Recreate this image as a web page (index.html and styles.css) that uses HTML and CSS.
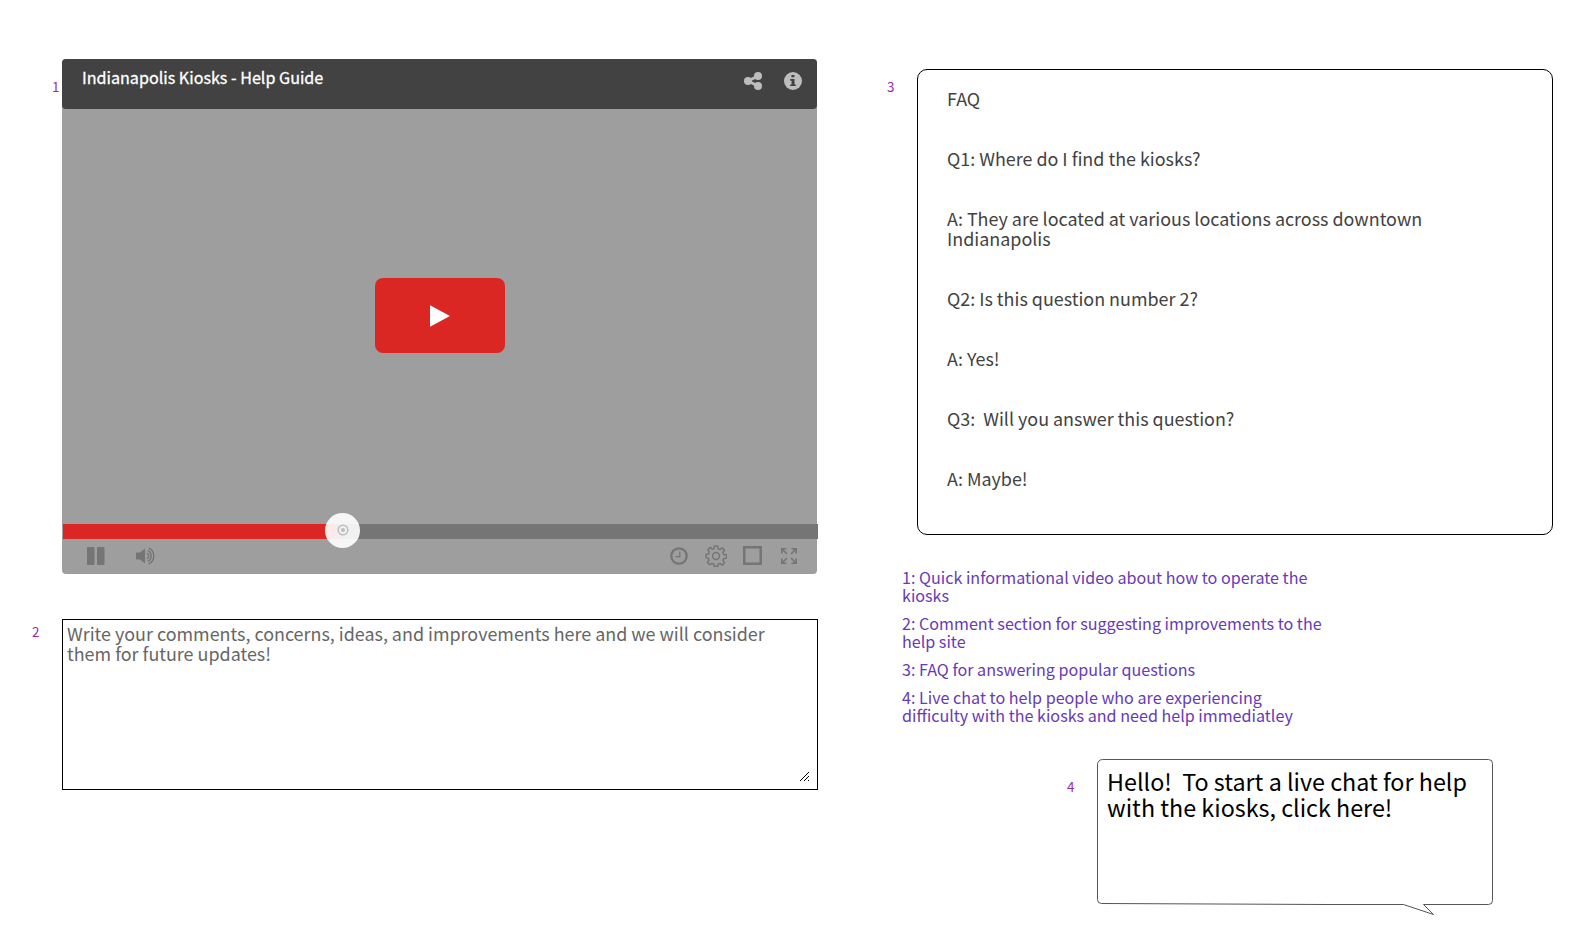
FILE: index.html
```html
<!DOCTYPE html>
<html lang="en">
<head>
<meta charset="utf-8">
<title>Indianapolis Kiosks - Help Guide</title>
<link rel="stylesheet" href="styles.css">
</head>
<body>
<main class="page">
  <div class="col-left">
    <section class="row row-video">
      <span class="marker marker-1">1</span>
      <div class="video">
        <header class="video-head">
          <h1 class="video-title">Indianapolis Kiosks - Help Guide</h1>
          <svg class="icon-share" width="18" height="18" viewBox="0 0 18 18"><path d="M4 9 14 4M4 9l10 5" stroke="currentColor" stroke-width="3"/><g fill="currentColor"><circle cx="4" cy="9" r="4"/><circle cx="14" cy="4" r="4"/><circle cx="14" cy="14" r="4"/></g></svg>
          <svg class="icon-info" width="18" height="18" viewBox="0 0 18 18"><circle cx="9" cy="9" r="9" fill="currentColor"/><path d="M7.400 2.900h3v2.400h-3zM6.200 7h4.300v5.400h1.300v1.700H6.200v-1.700h1.400V8.700H6.200z" fill="#424242"/></svg>
        </header>
        <div class="stage">
          <div class="play"><svg width="20" height="22" viewBox="0 0 20 22"><path d="M0 .3 20 11 0 21.700z" fill="#fff"/></svg></div>
        </div>
        <div class="progress"><div class="progress-fill"></div>
          <div class="knob"><svg width="12" height="12" viewBox="0 0 12 12"><circle cx="6" cy="6" r="4.800" fill="none" stroke="#bdbdbd" stroke-width="1.500"/><circle cx="6" cy="6" r="2" fill="#bdbdbd"/></svg></div>
        </div>
        <div class="controls">
          <svg class="icon-pause" width="18" height="18" viewBox="0 0 18 18"><g fill="currentColor"><rect width="7.500" height="18" rx=".8"/><rect x="10" width="7.500" height="18" rx=".8"/></g></svg>
          <svg class="icon-volume" width="20" height="18" viewBox="0 0 20 18"><path d="M0 5.500h4L9 1.500v15L4 12.500H0z" fill="currentColor"/><g fill="none" stroke="currentColor" stroke-width="1.400"><path d="M11 6.300a3 3 0 0 1 0 5.400"/><path d="M11.700 3.700a5.800 5.800 0 0 1 0 10.600"/><path d="M12.800 1.200a8.600 8.600 0 0 1 0 15.600"/></g></svg>
          <span class="spacer"></span>
          <svg class="icon-clock" width="18" height="18" viewBox="0 0 18 18"><circle cx="9" cy="9" r="7.700" fill="none" stroke="currentColor" stroke-width="2.300"/><path d="M9.800 4.500v5.200H5.500" fill="none" stroke="currentColor" stroke-width="1.300"/></svg>
          <svg class="icon-gear" width="22" height="22" viewBox="0 0 22 22"><g fill="none" stroke="currentColor" stroke-width="1.500" stroke-linejoin="round"><path d="M9.300 1h3.400l.3 2.700 2.100.9 2.200-1.700 2.300 2.300-1.700 2.200.9 2.100 2.700.3v3.400l-2.700.3-.9 2.100 1.700 2.200-2.300 2.300-2.200-1.700-2.100.9-.3 2.200H9.300L9 19.300l-2.100-.9-2.200 1.200-2.300-2.300 1.700-2.200-.9-2.100L1 12.700V9.300L3.700 9l.4-2.100-1.200-2.200 2.300-2.300 2.200 1.700L9 3.700z"/><circle cx="11" cy="11" r="3.400"/></g></svg>
          <svg class="icon-square" width="19" height="19" viewBox="0 0 19 19"><rect x="1.250" y="1.250" width="16.500" height="16.500" fill="none" stroke="currentColor" stroke-width="2.500"/></svg>
          <svg class="icon-expand" width="16" height="16" viewBox="0 0 16 16"><g fill="none" stroke="currentColor" stroke-width="1.600"><path d="M.8 5.500V.8h4.700M1 1l5 5M10.500.8h4.700v4.700M15 1l-5 5M.8 10.500v4.700h4.700M1 15l5-5M10.500 15.200h4.700v-4.700M15 15l-5-5"/></g></svg>
        </div>
      </div>
    </section>
    <section class="row row-comment">
      <span class="marker marker-2">2</span>
      <div class="comment">
        <p>Write your comments, concerns, ideas, and improvements here and we will consider<br>them for future updates!</p>
        <svg class="grip" width="9" height="9" viewBox="0 0 9 9" shape-rendering="crispEdges"><path d="M0 8h1v1H0zM1 7h1v1H1zM2 6h1v1H2zM3 5h1v1H3zM4 4h1v1H4zM5 3h1v1H5zM6 2h1v1H6zM7 1h1v1H7zM8 0h1v1H8zM4 8h1v1H4zM5 7h1v1H5zM6 6h1v1H6zM7 5h1v1H7zM8 4h1v1H8zM8 8h1v1H8z"/></svg>
      </div>
    </section>
  </div>
  <div class="col-right">
    <section class="row row-faq">
      <span class="marker marker-3">3</span>
      <div class="faq">
        <p>FAQ</p>
        <p>Q1: Where do I find the kiosks?</p>
        <p>A: They are located at various locations across downtown<br>Indianapolis</p>
        <p>Q2: Is this question number 2?</p>
        <p>A: Yes!</p>
        <p>Q3:&nbsp; Will you answer this question?</p>
        <p>A: Maybe!</p>
      </div>
    </section>
    <section class="notes">
      <p>1: Quick informational video about how to operate the<br>kiosks</p>
      <p>2: Comment section for suggesting improvements to the<br>help site</p>
      <p>3: FAQ for answering popular questions</p>
      <p>4: Live chat to help people who are experiencing<br>difficulty with the kiosks and need help immediatley</p>
    </section>
    <section class="row row-chat">
      <span class="marker marker-4">4</span>
      <div class="chat">
        <svg class="bubble" width="397" height="158" viewBox="0 0 397 158"><path d="M5.500.5h386a4 4 0 0 1 4 4v137a4 4 0 0 1-4 4h-65l10 10-30-10H230L4.500 144.500a4 4 0 0 1-4-4V5.500a5 5 0 0 1 5-5z" fill="#fff" stroke="#555"/></svg>
        <p>Hello!&nbsp; To start a live chat for help<br>with the kiosks, click here!</p>
      </div>
    </section>
  </div>
</main>
</body>
</html>
```
FILE: styles.css
```css
* { box-sizing: border-box; margin: 0; }
body {
  background: #fff;
  font-family: "Noto Sans CJK SC", "Noto Sans", sans-serif;
  font-size: 17.91px;
  line-height: 20px;
  overflow: hidden;
}
svg { display: block; flex: none; }
p, h1 { white-space: nowrap; }
.page { display: flex; width: 1585px; height: 931px; }
.col-left { width: 818px; padding-top: 59px; }
.col-right { flex: 1; padding-top: 69px; }
.row { display: flex; }
.marker { flex: none; color: #9c27b0; font-size: 13.4px; line-height: 16px; }
.marker-1 { width: 62px; padding: 19px 0 0 52px; }
.marker-2 { width: 62px; padding: 4px 0 0 32px; }
.marker-3 { width: 99px; padding: 9px 0 0 69px; }
.marker-4 { width: 30px; padding-top: 19px; }

.video { width: 755px; height: 515px; background: #9e9e9e; border-radius: 4px; }
.video-head {
  display: flex;
  height: 50px;
  padding: 9px 15px 0 20px;
  background: #424242;
  border-radius: 4px;
  color: #bdbdbd;
}
.video-title {
  flex: 1;
  margin-top: -1px;
  color: #fff;
  font-size: 16.13px;
  font-weight: 400;
  line-height: 20px;
  -webkit-text-stroke: .3px #fff;
}
.icon-share { margin: 4px 22px 0 0; }
.icon-info { margin-top: 4px; }
.stage { display: flex; justify-content: center; height: 415px; padding-top: 169px; }
.play {
  display: flex;
  align-items: center;
  justify-content: center;
  width: 130px;
  height: 75px;
  background: #db2724;
  border-radius: 8px;
}
.progress { position: relative; width: 755px; height: 15px; margin-left: 1px; background: #757575; }
.progress-fill { width: 275px; height: 15px; background: #db2724; }
.knob {
  position: absolute;
  left: 262.4px;
  top: -11px;
  display: flex;
  align-items: center;
  justify-content: center;
  width: 35px;
  height: 35px;
  padding-bottom: 1px;
  border-radius: 50%;
  background: rgba(255, 255, 255, .9);
}
.controls { display: flex; align-items: center; height: 33px; padding: 0 20px 0 25px; color: #757575; }
.icon-volume { margin-left: 31px; }
.spacer { flex: 1; }
.icon-gear { margin-left: 17px; }
.icon-square { margin-left: 16px; }
.icon-expand { margin-left: 19px; }

.row-comment { margin-top: 45px; }
.comment {
  position: relative;
  width: 756px;
  height: 171px;
  padding: 3px 4px;
  border: 1px solid #000;
  color: #666;
}
.grip { position: absolute; right: 8px; bottom: 8px; }

.faq {
  width: 636px;
  height: 466px;
  padding: 18px 0 0 29px;
  border: 1px solid #000;
  border-radius: 10px;
  color: #424242;
}
.faq p + p { margin-top: 40px; }
.notes { margin: 33px 0 0 84px; color: #673ab7; font-size: 16.13px; line-height: 18px; }
.notes p + p { margin-top: 10px; }
.row-chat { margin: 35px 0 0 249px; }
.chat { position: relative; width: 397px; height: 146px; padding: 9px 0 0 10px; font-size: 23.32px; line-height: 26px; }
.chat p { position: relative; }
.bubble { position: absolute; left: 0; top: 0; }
```
